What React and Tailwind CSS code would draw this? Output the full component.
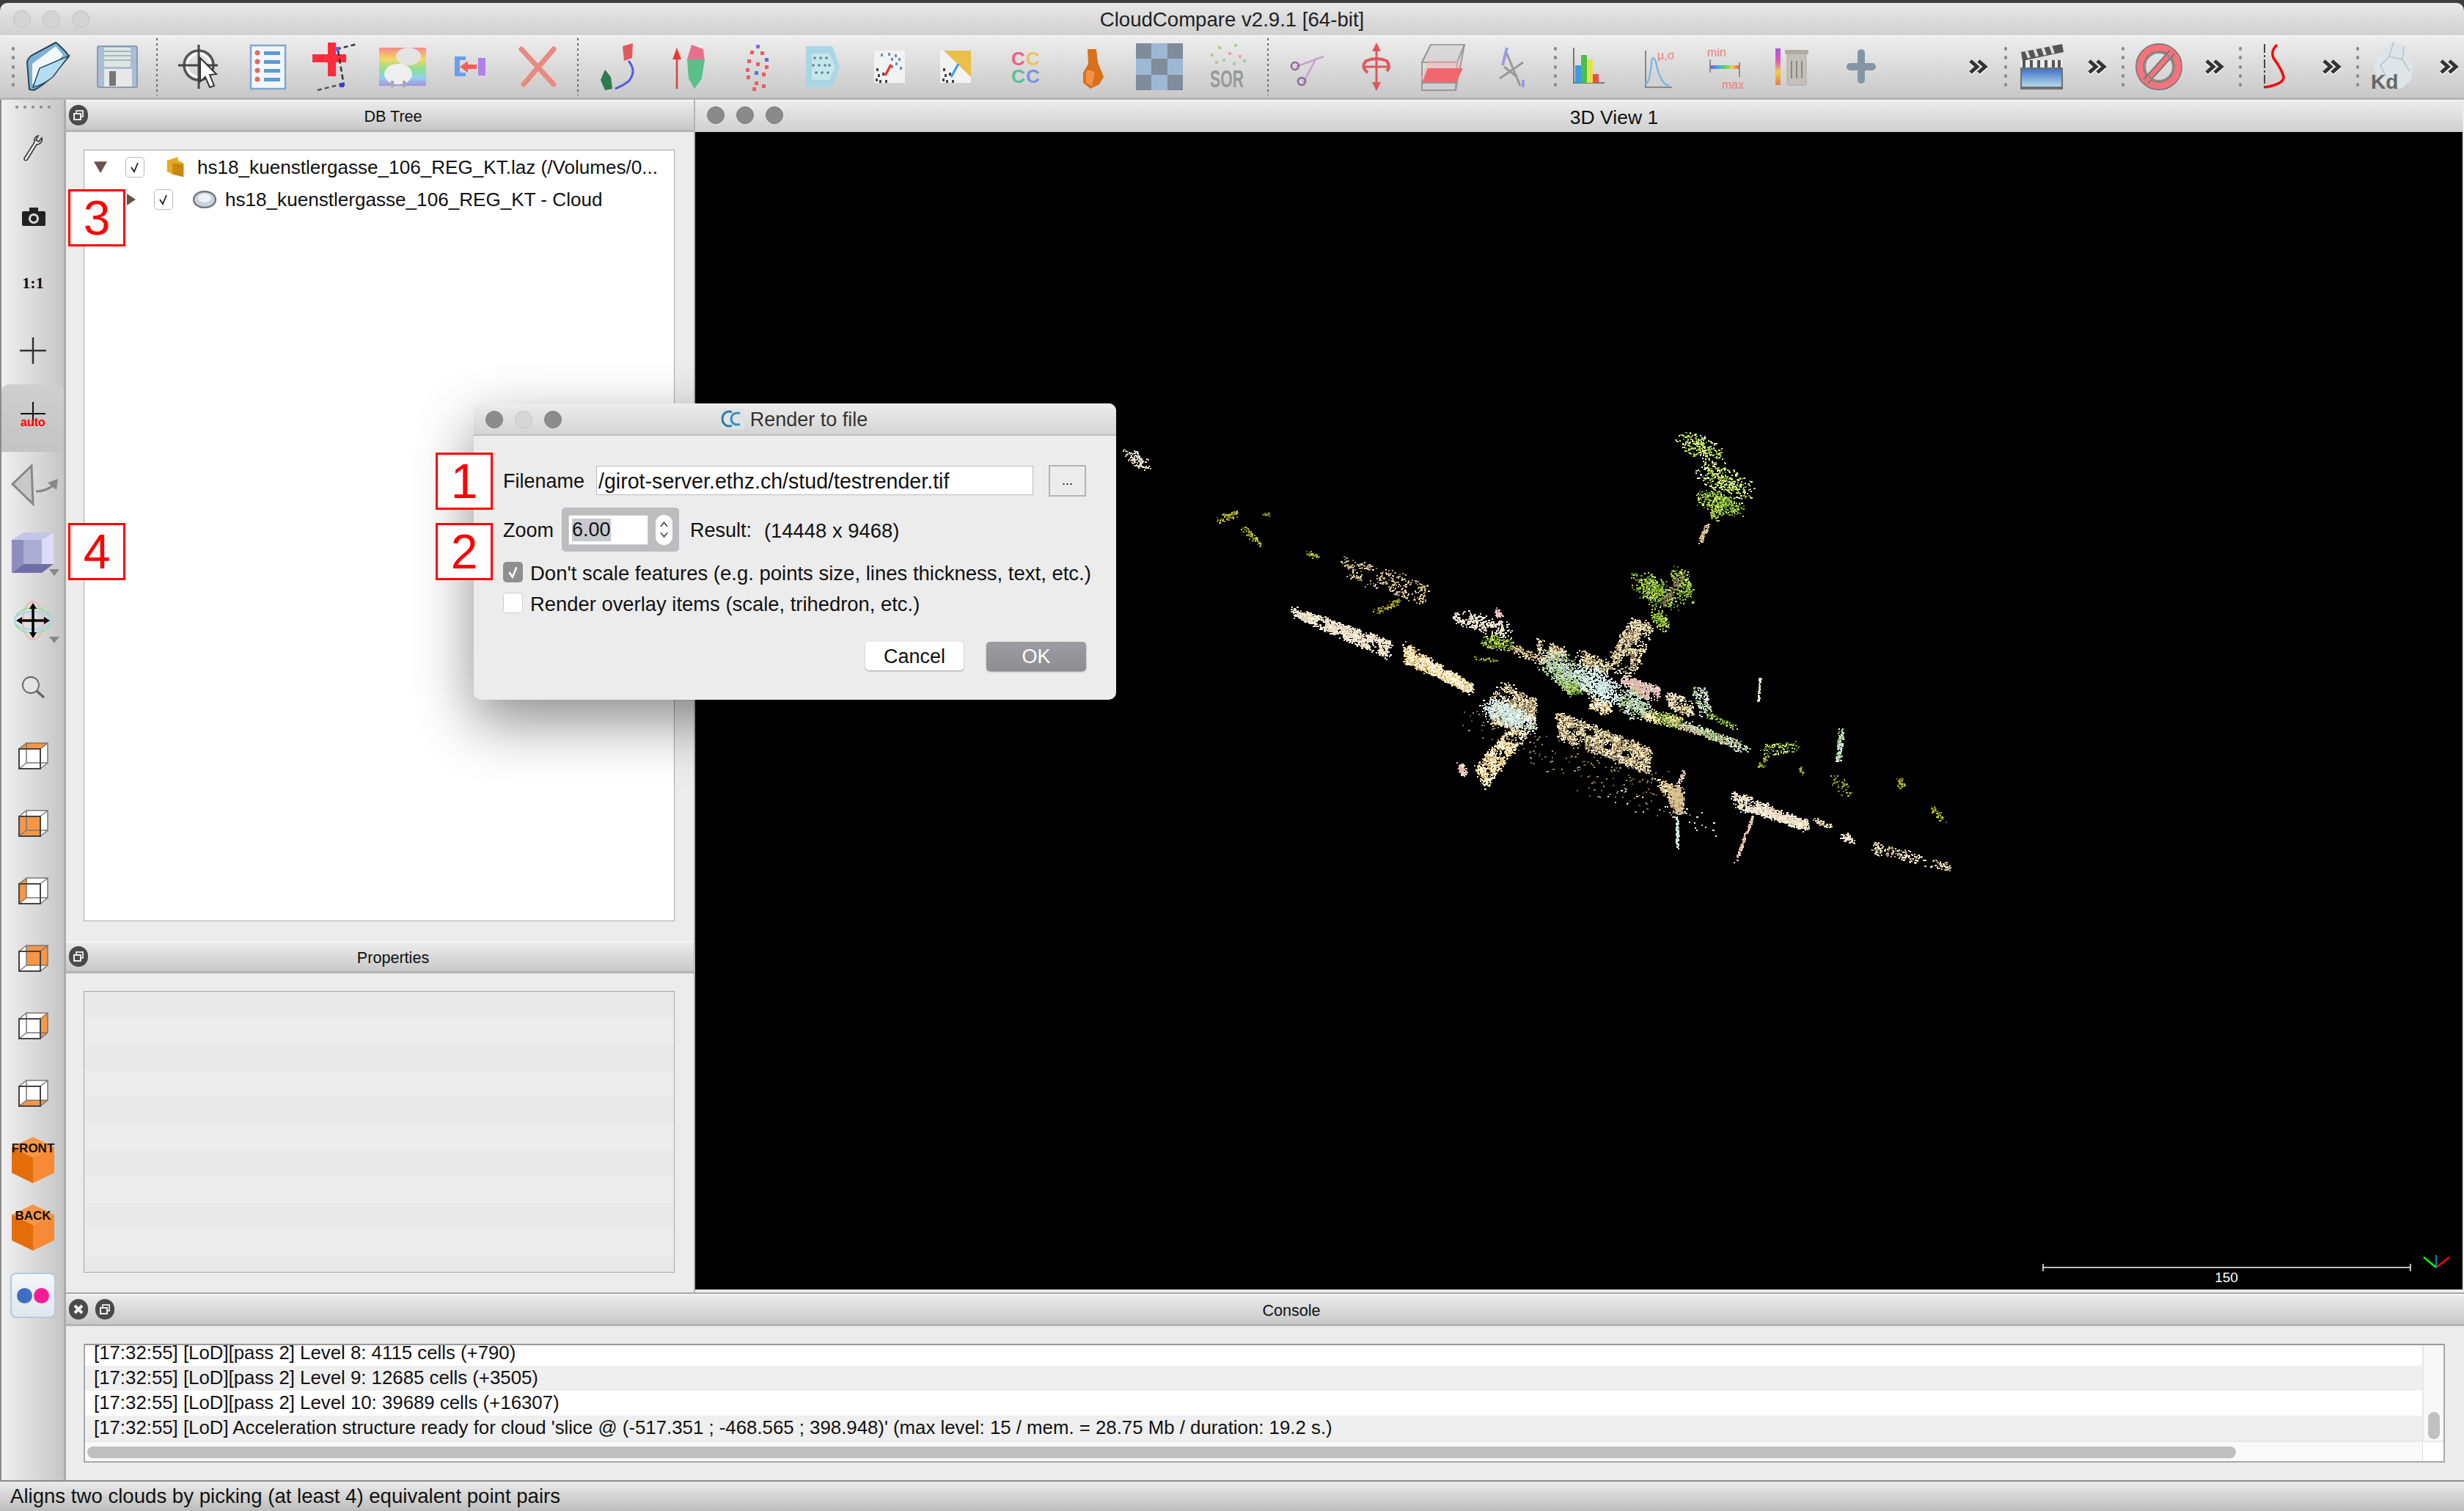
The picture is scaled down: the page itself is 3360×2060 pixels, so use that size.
import React, { useMemo } from "react";

// ---------- toolbar icons (72x72 box) ----------
const Box = ({ children, className = "" }) => (
  <svg viewBox="0 0 72 72" className={`w-[72px] h-[72px] block ${className}`}>
    {children}
  </svg>
);

const FolderIcon = () => (
  <Box>
    <path d="M8 67 L5 30 Q6 24 12 20 L44 3 L47 5 L58 16 L62 22 L38 50 Q26 62 14 68 Z" fill="#7fb2d4" stroke="#28465c" strokeWidth="2" />
    <path d="M12 60 L12 32 L44 8 L54 20 L32 46 Z" fill="#f2f7fb" />
    <path d="M13 64 L22 38 L62 21 L40 50 Q28 60 13 64 Z" fill="#b4dcf2" stroke="#2a4a60" strokeWidth="1.5" />
  </Box>
);
const SaveIcon = () => (
  <Box>
    <rect x="9" y="8" width="54" height="56" rx="2" fill="#a9bdd6" stroke="#8b9bb0" strokeWidth="2" />
    <rect x="18" y="10" width="36" height="26" fill="#dfe7e4" />
    <path d="M18 15h36M18 21h36M18 27h36" stroke="#a8b6bc" strokeWidth="2" />
    <rect x="18" y="39" width="38" height="24" fill="#e8e8e8" />
    <rect x="25" y="42" width="9" height="20" fill="#777" />
  </Box>
);
const PickIcon = () => (
  <Box>
    <circle cx="34" cy="34" r="20" fill="none" stroke="#555" strokeWidth="3.5" />
    <circle cx="34" cy="34" r="16" fill="none" stroke="#fff" strokeWidth="3" />
    <path d="M34 6V66M6 34H60" stroke="#444" strokeWidth="3" />
    <path d="M36 24 L36 56 L43 50 L49 64 L55 62 L49 47 L58 46 Z" fill="#fff" stroke="#333" strokeWidth="2" />
  </Box>
);
const ListIcon = () => (
  <Box>
    <rect x="13" y="7" width="47" height="59" fill="#f2f6fa" stroke="#7fa8cf" strokeWidth="2.5" />
    {[17, 29, 41, 53].map((y) => (
      <g key={y}>
        <circle cx="22" cy={y} r="3.5" fill="#e8685e" />
        <rect x="31" y={y - 2} width="22" height="5" fill="#5b9bd5" />
      </g>
    ))}
  </Box>
);
const CrossIcon = () => (
  <Box>
    <rect x="26" y="3" width="11" height="46" fill="#ff2a3c" />
    <rect x="5" y="19" width="46" height="11" fill="#ff2a3c" />
    <path d="M38 12 L66 5" stroke="#333" strokeWidth="2.5" strokeDasharray="6 4" />
    <path d="M40 14 L48 62" stroke="#333" strokeWidth="2.5" strokeDasharray="7 4" />
    <path d="M12 68 L44 60" stroke="#555" strokeWidth="2.5" strokeDasharray="6 4" />
    <rect x="36" y="9" width="6" height="6" fill="#6a5ae0" />
    <rect x="42" y="58" width="6" height="6" fill="#3a3ae0" />
  </Box>
);
const RainbowIcon = () => (
  <Box>
    <defs>
      <linearGradient id="rb" x1="0" y1="0" x2="0" y2="1">
        <stop offset="0" stopColor="#f58a8a" />
        <stop offset="0.3" stopColor="#f6d860" />
        <stop offset="0.55" stopColor="#8fe08f" />
        <stop offset="0.8" stopColor="#8fd0f0" />
        <stop offset="1" stopColor="#a78fe0" />
      </linearGradient>
    </defs>
    <rect x="4" y="10" width="64" height="52" fill="url(#rb)" />
    <ellipse cx="44" cy="22" rx="17" ry="12" fill="#e4e4e4" />
    <ellipse cx="30" cy="46" rx="19" ry="14" fill="#efefef" />
    <rect x="20" y="55" width="4" height="9" fill="#aaa" />
    <rect x="36" y="55" width="4" height="9" fill="#aaa" />
  </Box>
);
const MergeIcon = () => (
  <Box>
    <rect x="15" y="22" width="7" height="27" fill="#5b9ef0" />
    <path d="M15 22H30V27H22V44H30V49H15Z" fill="#6aa0f0" />
    <rect x="47" y="24" width="10" height="24" fill="#b27fe8" />
    <path d="M45 33H33V28L22 36L33 44V39H45Z" fill="#ff5a5a" />
  </Box>
);
const XIcon = () => (
  <Box>
    <path d="M14 12 L58 60 M58 12 L17 60" stroke="#e88a7e" strokeWidth="7" strokeLinecap="round" />
  </Box>
);
const RegIcon = () => (
  <Box>
    <path d="M40 8 L54 4 L53 24 L42 28 Z" fill="#e05a5a" />
    <path d="M16 40 L24 50 L26 66 L16 68 L10 54 Z" fill="#2f7a4f" />
    <path d="M48 28 Q60 42 48 56 Q40 62 30 66" fill="none" stroke="#5a5ae8" strokeWidth="3" />
  </Box>
);
const NormalIcon = () => (
  <Box>
    <path d="M42 6 L58 12 L60 28 L36 26 Z" fill="#e8708a" />
    <path d="M36 26 L60 26 L56 52 L46 66 L38 52 Z" fill="#58c088" />
    <path d="M22 66V22" stroke="#e83a3a" strokeWidth="2.5" />
    <path d="M22 10 L16 26 H28 Z" fill="#e83a3a" />
  </Box>
);
const DotsIcon = () => (
  <Box>
    {[
      [38, 6, "#8a6ae0"], [30, 14, "#f05a5a"], [44, 15, "#f05a5a"], [50, 24, "#5a70e0"], [26, 26, "#f05a5a"], [38, 30, "#f05a5a"],
      [50, 34, "#f05a5a"], [24, 38, "#f05a5a"], [36, 42, "#5a70e0"], [46, 44, "#f05a5a"], [25, 48, "#f05a5a"], [36, 56, "#f05a5a"], [46, 60, "#f05a5a"], [33, 64, "#f05a5a"],
    ].map(([x, y, c], i) => (
      <rect key={i} x={x} y={y} width="5" height="5" fill={c} />
    ))}
  </Box>
);
const TileIcon = () => (
  <Box>
    <path d="M14 8H50L60 36L50 64H14Z" fill="#a9d6e6" />
    <path d="M22 18H46L54 36L46 54H22Z" fill="#c5e6ea" />
    {[[26, 24], [34, 24], [42, 24], [24, 34], [32, 34], [40, 34], [46, 34], [28, 44], [36, 44], [44, 44]].map(([x, y], i) => (
      <circle key={i} cx={x} cy={y} r="1.8" fill="#5b7f8f" />
    ))}
  </Box>
);
const ScatterIcon = () => (
  <Box>
    <rect x="15" y="14" width="42" height="44" fill="#f2f2f2" />
    {[[24, 18], [34, 17], [43, 19], [38, 24], [48, 24], [44, 30], [38, 34], [50, 36]].map(([x, y], i) => (
      <rect key={i} x={x} y={y} width="3" height="4" fill="#6a90b8" />
    ))}
    {[[18, 38], [20, 46], [26, 44], [22, 54], [30, 54], [17, 52]].map(([x, y], i) => (
      <rect key={i} x={x} y={y} width="3" height="4" fill="#444" />
    ))}
    <path d="M30 48 L38 33" stroke="#e83a3a" strokeWidth="3.5" />
  </Box>
);
const ScatterTriIcon = () => (
  <Box>
    <rect x="13" y="14" width="42" height="44" fill="#f2f2f2" />
    <path d="M18 14H55V50Z" fill="#e8c04a" />
    {[[17, 38], [19, 46], [25, 44], [21, 54], [29, 54], [16, 52]].map(([x, y], i) => (
      <rect key={i} x={x} y={y} width="3" height="4" fill="#444" />
    ))}
    <path d="M28 50 L38 32" stroke="#3a9ae8" strokeWidth="3" />
  </Box>
);
const CcIcon = () => (
  <Box>
    <text x="18" y="34" fontFamily="Liberation Sans, sans-serif" fontSize="26" fontWeight="700" fill="#f0608a">C</text>
    <text x="38" y="34" fontFamily="Liberation Sans, sans-serif" fontSize="26" fontWeight="700" fill="#f2c060">C</text>
    <text x="18" y="58" fontFamily="Liberation Sans, sans-serif" fontSize="26" fontWeight="700" fill="#58c098">C</text>
    <text x="38" y="58" fontFamily="Liberation Sans, sans-serif" fontSize="26" fontWeight="700" fill="#7f90e8">C</text>
  </Box>
);
const BottleIcon = () => (
  <Box>
    <path d="M30 12 L42 12 L44 30 L52 50 L46 60 L34 66 L24 58 L24 44 L31 32 Z" fill="#d8701c" />
    <path d="M28 42 Q34 38 40 44 L36 62 L28 58 Z" fill="#f29044" />
  </Box>
);
const Checker = () => (
  <div className="grid grid-cols-3 grid-rows-3 w-[64px] h-[64px] mx-auto">
    {[0, 1, 0, 1, 0, 1, 0, 1, 0].map((v, i) => (
      <div key={i} className={v ? "bg-[#9db8d4]" : "bg-[#7f8c9c]"} />
    ))}
  </div>
);
const SorIcon = () => (
  <Box>
    {[[24, 8, "#a8d090"], [46, 5, "#a8d090"], [38, 16, "#f0a0a0"], [52, 20, "#f0a0a0"], [14, 18, "#a8d090"], [30, 25, "#a8d090"], [58, 26, "#a8d090"], [20, 28, "#a8d090"], [44, 30, "#a8d090"]].map(([x, y, c], i) => (
      <rect key={i} x={x} y={y} width="4" height="4" fill={c} />
    ))}
    <text x="13" y="64" fontFamily="Liberation Sans, sans-serif" fontSize="34" fontWeight="700" fill="#999" textLength="46" lengthAdjust="spacingAndGlyphs">SOR</text>
  </Box>
);
const ScissorIcon = () => (
  <Box>
    <path d="M18 36 L56 22 M28 58 L46 24" stroke="#c8a0d0" strokeWidth="2.5" />
    <circle cx="17" cy="35" r="5" fill="none" stroke="#8a6a9a" strokeWidth="2.5" />
    <circle cx="26" cy="56" r="5" fill="none" stroke="#8a6a9a" strokeWidth="2.5" />
  </Box>
);
const RotTransIcon = () => (
  <Box>
    <path d="M36 6V66" stroke="#e0565e" strokeWidth="3" />
    <path d="M36 3 L30 15 H42Z M36 69 L30 57 H42Z" fill="#e0565e" />
    <path d="M24 44 Q14 36 22 28 Q36 22 50 28 Q56 36 50 42" fill="none" stroke="#e0565e" strokeWidth="4" />
    <path d="M18 36H54" stroke="#e0565e" strokeWidth="3" />
  </Box>
);
const SliceIcon = () => (
  <Box>
    <path d="M6 30 L18 6 L64 6 L52 68 L6 68 Z" fill="none" stroke="#999" strokeWidth="2" />
    <path d="M18 6 L6 30 H54 L64 6" fill="rgba(200,200,200,.4)" stroke="#999" strokeWidth="2" />
    <path d="M6 30 H54 L52 68" fill="none" stroke="#999" strokeWidth="2" />
    <path d="M14 27 L60 27 L50 54 L4 54 Z" fill="rgba(245,180,180,.5)" />
    <path d="M14 38 L62 38 L52 58 H6 Z" fill="#f0686e" />
    <path d="M6 58 H52" stroke="#999" strokeWidth="2" />
  </Box>
);
const StarIcon = () => (
  <Box>
    <path d="M28 14 L48 62 M20 52 L52 30 M26 36 L44 50" stroke="#999" strokeWidth="3" />
    <path d="M30 10 L24 34 M52 54 L52 64" stroke="#9a9ae8" strokeWidth="4" />
  </Box>
);
const HistIcon = () => (
  <Box>
    <path d="M12 10V58H54" fill="none" stroke="#777" strokeWidth="2" />
    <rect x="14" y="34" width="8" height="24" fill="#3a9ae8" />
    <rect x="22" y="20" width="8" height="38" fill="#4ac04a" />
    <rect x="30" y="26" width="8" height="32" fill="#e8e04a" />
    <rect x="38" y="46" width="8" height="12" fill="#e8504a" />
  </Box>
);
const GaussIcon = () => (
  <Box>
    <path d="M18 14V64H54" fill="none" stroke="#888" strokeWidth="2" />
    <path d="M18 60 Q24 56 26 30 Q28 18 32 30 Q38 60 50 62" fill="none" stroke="#7ab8e0" strokeWidth="2.5" />
    <text x="34" y="26" fontFamily="Liberation Sans, sans-serif" fontSize="16" fill="#f07f7f">μ,σ</text>
  </Box>
);
const MinMaxIcon = () => (
  <Box>
    <text x="10" y="22" fontFamily="Liberation Sans, sans-serif" fontSize="16" fill="#f07f7f">min</text>
    <text x="30" y="66" fontFamily="Liberation Sans, sans-serif" fontSize="16" fill="#f07f7f">max</text>
    <defs>
      <linearGradient id="mm">
        <stop offset="0" stopColor="#7a5ae0" />
        <stop offset="0.3" stopColor="#4ab0e0" />
        <stop offset="0.5" stopColor="#5ad05a" />
        <stop offset="0.75" stopColor="#e8d04a" />
        <stop offset="1" stopColor="#e85a5a" />
      </linearGradient>
    </defs>
    <rect x="14" y="34" width="40" height="5" fill="url(#mm)" />
    <path d="M14 26V44M54 30V50" stroke="#777" strokeWidth="1.5" />
  </Box>
);
const TrashIcon = () => (
  <Box>
    <defs>
      <linearGradient id="tb" x1="0" y1="0" x2="0" y2="1">
        <stop offset="0" stopColor="#a05ae0" />
        <stop offset="0.35" stopColor="#e85ab0" />
        <stop offset="0.65" stopColor="#e8d04a" />
        <stop offset="1" stopColor="#e87a4a" />
      </linearGradient>
    </defs>
    <rect x="11" y="11" width="7" height="50" fill="url(#tb)" />
    <rect x="27" y="16" width="26" height="45" rx="2" fill="#c4c0b8" stroke="#aaa" />
    <rect x="24" y="13" width="32" height="6" rx="2" fill="#b0aca4" />
    <path d="M33 28V52M40 28V52M47 28V52" stroke="#888" strokeWidth="2" />
  </Box>
);
const PlusIcon = () => (
  <Box>
    <path d="M36 17V54M21 36H51" stroke="#8496a6" strokeWidth="10" strokeLinecap="round" />
  </Box>
);
const ClapIcon = () => (
  <Box>
    <path d="M8 16 L64 5 L66 16 L10 28 Z" fill="#555" />
    <path d="M15 14 L19 24 M26 11 L30 22 M37 9 L41 20 M48 7 L52 18" stroke="#ddd" strokeWidth="4" />
    <rect x="7" y="27" width="58" height="10" fill="#eee" />
    <path d="M12 27V37M22 27V37M32 27V37M42 27V37M52 27V37M60 27V37" stroke="#555" strokeWidth="4" />
    <defs>
      <linearGradient id="cl" x1="0" y1="0" x2="0" y2="1">
        <stop offset="0" stopColor="#3f74c8" />
        <stop offset="1" stopColor="#b5d8ea" />
      </linearGradient>
    </defs>
    <rect x="7" y="37" width="58" height="30" fill="#6f6f6f" />
    <rect x="9" y="39" width="54" height="24" fill="url(#cl)" />
  </Box>
);
const NoIcon = () => (
  <Box>
    <circle cx="36" cy="36" r="26" fill="none" stroke="#777" strokeWidth="12" />
    <circle cx="36" cy="36" r="26" fill="none" stroke="#f4737c" strokeWidth="9" />
    <path d="M18 56 L54 16" stroke="#777" strokeWidth="10" />
    <path d="M18 56 L54 16" stroke="#f4737c" strokeWidth="6" />
    <circle cx="36" cy="36" r="19" fill="none" stroke="#888" strokeWidth="2" />
  </Box>
);
const SCurveIcon = () => (
  <Box>
    <path d="M20 5V68" stroke="#444" strokeWidth="2" strokeDasharray="12 3 3 3" />
    <path d="M37 6 Q28 14 32 24 Q44 40 46 50 Q46 60 20 64" fill="none" stroke="#f00" strokeWidth="3.5" />
  </Box>
);
const KdIcon = () => (
  <Box>
    <path d="M36 2 L50 8 L62 34 L60 54 L46 66 L20 60 L8 38 L18 16 Z" fill="#dde5e8" />
    <path d="M36 2 L30 22 L48 26 L50 8 M30 22 L18 34 L26 50 M48 26 L58 42" fill="none" stroke="#b8c4c8" strokeWidth="1.5" />
    <text x="5" y="66" fontFamily="Liberation Sans, sans-serif" fontSize="28" fontWeight="700" fill="#666">Kd</text>
  </Box>
);

const More = () => (
  <svg viewBox="0 0 30 22" className="w-[30px] h-[22px] block">
    <path d="M4 3 L13 11 L4 19 M15 3 L24 11 L15 19" fill="none" stroke="#fff" strokeWidth="5" transform="translate(0 1.5)" />
    <path d="M4 3 L13 11 L4 19 M15 3 L24 11 L15 19" fill="none" stroke="#333" strokeWidth="5" />
  </svg>
);

// toolbar pieces
const Slot = ({ children }) => (
  <div className="w-[92px] h-full flex items-center justify-center shrink-0">{children}</div>
);
const DashSep = () => (
  <div className="w-[2px] h-[78px] shrink-0 bg-[repeating-linear-gradient(to_bottom,#6a6a6a_0,#6a6a6a_3px,transparent_3px,transparent_7px)]" />
);
const Handle = () => (
  <div className="w-[6px] h-[54px] flex flex-col justify-between items-center shrink-0">
    {[0, 1, 2, 3, 4].map((i) => (
      <div key={i} className="w-[4px] h-[5px] rounded-full bg-[#8a8a8a]" />
    ))}
  </div>
);
const Overflow = ({ icon }) => (
  <div className="w-[160px] h-full flex items-center shrink-0">
    <Handle />
    <div className="w-[92px] flex items-center justify-center">{icon}</div>
    <div className="w-[60px] flex items-center justify-center"><More /></div>
  </div>
);

function TopToolbar() {
  return (
    <div className="h-[88px] flex items-center border-t border-[#f6f6f6] border-b-[3px] border-b-[#b4b4b4] bg-gradient-to-b from-[#eeeeee] to-[#c8c8c8] pl-[15px]">
      <Handle />
      <div className="w-[1px] shrink-0" />
      <Slot><FolderIcon /></Slot>
      <Slot><SaveIcon /></Slot>
      <div className="w-[7px] shrink-0" />
      <DashSep />
      <div className="w-[12px] shrink-0" />
      <Slot><PickIcon /></Slot>
      <Slot><ListIcon /></Slot>
      <Slot><CrossIcon /></Slot>
      <Slot><RainbowIcon /></Slot>
      <Slot><MergeIcon /></Slot>
      <Slot><XIcon /></Slot>
      <div className="w-[8px] shrink-0" />
      <DashSep />
      <div className="w-[10px] shrink-0" />
      <Slot><RegIcon /></Slot>
      <Slot><NormalIcon /></Slot>
      <Slot><DotsIcon /></Slot>
      <Slot><TileIcon /></Slot>
      <Slot><ScatterIcon /></Slot>
      <Slot><ScatterTriIcon /></Slot>
      <Slot><CcIcon /></Slot>
      <Slot><BottleIcon /></Slot>
      <Slot><Checker /></Slot>
      <Slot><SorIcon /></Slot>
      <div className="w-[9px] shrink-0" />
      <DashSep />
      <div className="w-[9px] shrink-0" />
      <Slot><ScissorIcon /></Slot>
      <Slot><RotTransIcon /></Slot>
      <Slot><SliceIcon /></Slot>
      <Slot><StarIcon /></Slot>
      <div className="w-[11px] shrink-0" />
      <Handle />
      <Slot><HistIcon /></Slot>
      <Slot><GaussIcon /></Slot>
      <Slot><MinMaxIcon /></Slot>
      <Slot><TrashIcon /></Slot>
      <Slot><PlusIcon /></Slot>
      <div className="w-[129px] shrink-0 flex justify-end"><More /></div>
      <div className="w-[19px] shrink-0" />
      <Overflow icon={<ClapIcon />} />
      <Overflow icon={<NoIcon />} />
      <Overflow icon={<SCurveIcon />} />
      <Overflow icon={<KdIcon />} />
    </div>
  );
}

// ---------- left toolbar icons ----------
const CubeFace = ({ face }) => {
  const F = { x: 17, y: 27, x2: 46, y2: 54 };
  const B = { x: 27, y: 19, x2: 56, y2: 46 };
  const shapes = {
    top: `M${F.x} ${F.y}L${B.x} ${B.y}H${B.x2}L${F.x2} ${F.y}Z`,
    front: `M${F.x} ${F.y}H${F.x2}V${F.y2}H${F.x}Z`,
    left: `M${F.x} ${F.y}L${B.x} ${B.y}V${B.y2}L${F.x} ${F.y2}Z`,
    back: `M${B.x} ${B.y}H${B.x2}V${B.y2}H${B.x}Z`,
    right: `M${F.x2} ${F.y}L${B.x2} ${B.y}V${B.y2}L${F.x2} ${F.y2}Z`,
    bottom: `M${F.x} ${F.y2}L${B.x} ${B.y2}H${B.x2}L${F.x2} ${F.y2}Z`,
  };
  return (
    <Box>
      <path d={`M${F.x} ${F.y}H${F.x2}V${F.y2}H${F.x}Z`} fill="#fff" />
      <path d={`M${F.x2} ${F.y}L${B.x2} ${B.y}V${B.y2}L${F.x2} ${F.y2}Z M${F.x} ${F.y}L${B.x} ${B.y}H${B.x2}L${F.x2} ${F.y}Z`} fill="#fff" />
      <path d={shapes[face]} fill="#f79646" />
      <path d={`M${B.x} ${B.y}H${B.x2}V${B.y2}H${B.x}Z M${F.x} ${F.y}L${B.x} ${B.y} M${F.x2} ${F.y}L${B.x2} ${B.y} M${F.x} ${F.y2}L${B.x} ${B.y2} M${F.x2} ${F.y2}L${B.x2} ${B.y2}`} fill="none" stroke="#777" strokeWidth="1.5" />
      <path d={`M${F.x} ${F.y}H${F.x2}V${F.y2}H${F.x}Z`} fill="none" stroke="#444" strokeWidth="2" />
    </Box>
  );
};
const OrangeCube = ({ label }) => (
  <Box>
    <path d="M36 4 L65 18 L36 32 L7 18 Z" fill="#f79646" />
    <path d="M7 18 L36 32 V67 L7 53 Z" fill="#e46c0a" />
    <path d="M65 18 L36 32 V67 L65 53 Z" fill="#f68a36" />
    <text x="36" y="25" textAnchor="middle" fontFamily="Liberation Sans, sans-serif" fontSize="17" fontWeight="700" fill="#111">{label}</text>
  </Box>
);
const leftIcons = [
  <Box key="wrench"><path d="M24 50 L38 28 A7 7 0 0 1 43 19 L40 25 L44 27 L48 22 A7 7 0 0 1 41 31 L28 52 Q24 54 24 50Z" fill="#f2f2f2" stroke="#444" strokeWidth="1.8" /></Box>,
  <Box key="camera"><rect x="21" y="30" width="32" height="20" rx="2" fill="#222" /><rect x="31" y="25" width="12" height="6" fill="#222" /><circle cx="37" cy="40" r="7" fill="#ddd" /><circle cx="37" cy="40" r="4" fill="#222" /></Box>,
  <Box key="one"><text x="36" y="43" textAnchor="middle" fontFamily="Liberation Serif, serif" fontSize="22" fontWeight="700" fill="#111">1:1</text></Box>,
  <Box key="plus"><path d="M36 18V54M18 36H54" stroke="#333" strokeWidth="2.5" /></Box>,
  <Box key="auto"><path d="M36 14V46M19 30H53" stroke="#111" strokeWidth="2" /><text x="36" y="47" textAnchor="middle" fontFamily="Liberation Sans, sans-serif" fontSize="16" fontWeight="700" fill="#f00">auto</text></Box>,
  <Box key="tri"><path d="M34 9 L8 34 L36 61 Z" fill="#c9c9c9" stroke="#888" strokeWidth="3" /><path d="M40 44 Q54 44 66 34" fill="none" stroke="#888" strokeWidth="3" /><path d="M56 32 L70 27 L68 42 Z" fill="#888" /></Box>,
  <Box key="cube"><path d="M7 18 L23 8 H64 L48 18 Z" fill="#c5c5ec" /><path d="M48 18 L64 8 V51 L48 63 Z" fill="#dcdcf8" /><rect x="23" y="18" width="25" height="33" fill="#adadd4" /><path d="M7 18 H23 V51 L7 63 Z" fill="#8d8dc0" /><path d="M7 63 L23 51 H64 L48 63 Z" fill="#6f6fa8" /><path d="M58 58 H72 L65 67 Z" fill="#888" /></Box>,
  <Box key="move"><ellipse cx="36" cy="36" rx="14" ry="26" fill="none" stroke="#f4b4b4" strokeWidth="2" /><ellipse cx="36" cy="36" rx="25" ry="17" fill="none" stroke="#98e098" strokeWidth="2" /><ellipse cx="36" cy="36" rx="25" ry="12" fill="none" stroke="#a8d4f4" strokeWidth="2" /><path d="M36 16V56M17 36H55" stroke="#000" strokeWidth="3.5" /><path d="M36 12 L31 20 H41Z M36 60 L31 52 H41Z M13 36 L21 31 V41Z M59 36 L51 31 V41Z" fill="#000" /><path d="M58 58 H72 L65 67 Z" fill="#888" /></Box>,
  <Box key="lens"><circle cx="33" cy="32" r="11" fill="#e4e4e4" stroke="#666" strokeWidth="1.8" /><path d="M41 40 L51 49" stroke="#666" strokeWidth="3.5" /></Box>,
  <CubeFace key="top" face="top" />,
  <CubeFace key="front" face="front" />,
  <CubeFace key="left" face="left" />,
  <CubeFace key="back" face="back" />,
  <CubeFace key="right" face="right" />,
  <CubeFace key="bottom" face="bottom" />,
  <OrangeCube key="F" label="FRONT" />,
  <OrangeCube key="B" label="BACK" />,
];

function LeftToolbar() {
  return (
    <div className="w-[90px] shrink-0 border-l-2 border-[#8a8a8a] border-r-[3px] border-r-[#ababab] bg-gradient-to-r from-[#f0f0f0] to-[#c6c6c6] flex flex-col items-center">
      <div className="h-[20px] w-full flex items-center justify-center gap-[7px] shrink-0">
        {[0, 1, 2, 3, 4].map((i) => (
          <div key={i} className="w-[4px] h-[4px] rounded-full bg-[#8a8a8a]" />
        ))}
      </div>
      {leftIcons.map((icon, i) => (
        <div
          key={i}
          className={`w-full h-[92px] flex items-center justify-center shrink-0 ${i === 4 ? "bg-gradient-to-b from-[#cfcfcf] to-[#c4c4c4] rounded-t-[10px]" : ""}`}
        >
          {icon}
        </div>
      ))}
      <div className="h-[92px] flex items-center justify-center shrink-0">
        <div className="w-[62px] h-[62px] rounded-[8px] border-2 border-[#b8c8d6] bg-gradient-to-b from-[#f4f6f8] to-[#dfe6ee] flex items-center justify-center gap-[2px]">
          <div className="w-[21px] h-[21px] rounded-full bg-[#3f6fc4]" />
          <div className="w-[21px] h-[21px] rounded-full bg-[#fb1a96]" />
        </div>
      </div>
    </div>
  );
}

// ---------- shared bits ----------
const Tip = ({ x }) => (
  <div className="w-[26px] h-[28px] rounded-full bg-[#4a4a4a] flex items-center justify-center shrink-0">
    {x ? (
      <svg viewBox="0 0 16 16" className="w-[16px] h-[16px]"><path d="M3 3L13 13M13 3L3 13" stroke="#eee" strokeWidth="4" /></svg>
    ) : (
      <svg viewBox="0 0 16 16" className="w-[16px] h-[16px]"><rect x="5" y="2" width="9" height="8" fill="none" stroke="#ddd" strokeWidth="2" /><rect x="2" y="6" width="9" height="8" fill="#4a4a4a" stroke="#eee" strokeWidth="2" /></svg>
    )}
  </div>
);

const DockTitle = ({ title, close }) => (
  <div className={`h-[44px] relative flex items-center justify-center shrink-0 border-t-2 border-[#f4f4f4] border-b-[3px] border-b-[#b4b4b4] bg-gradient-to-b from-[#ececec] to-[#c8c8c8] ${close ? "pl-[72px]" : "pl-[36px]"}`}>
    <div className="absolute left-[4px] top-[5px] flex gap-[10px]">
      {close && <Tip x />}
      <Tip />
    </div>
    <span className="text-[21.6px] leading-[28px] text-[#111] pt-[2px]">{title}</span>
  </div>
);

const Lights = ({ cls, gap = "gap-[16px]" }) => (
  <div className={`flex ${gap}`}>
    {cls.map((c, i) => (
      <div key={i} className={`w-[24px] h-[24px] rounded-full border ${c}`} />
    ))}
  </div>
);

const Check = ({ className = "" }) => (
  <div className={`w-[26px] h-[28px] rounded-[5px] border border-[#b8b8b8] bg-white flex items-center justify-center shrink-0 ${className}`}>
    <svg viewBox="0 0 16 16" className="w-[16px] h-[16px]"><path d="M3 8 L7 14 L12 2" fill="none" stroke="#222" strokeWidth="1.8" /></svg>
  </div>
);

const Note = ({ n, className }) => (
  <div className={`absolute w-[78px] h-[78px] bg-white border-[3px] border-[#f00] flex items-center justify-center text-[#f00] text-[66px] leading-[72px] ${className}`}>
    {n}
  </div>
);

// ---------- point cloud ----------
const P = {
  cream: ["#fff8e0", "#f5e6b8", "#e8d49a", "#ffffff", "#c9b48a", "#8f7d5a"],
  white: ["#ffffff", "#fff6e6", "#f0e2c8", "#d8c8a8", "#ffffff"],
  tan: ["#b9a070", "#d8c090", "#8f7d5a", "#f0dfb8"],
  yellow: ["#f8e0a0", "#f0d080", "#fff0c0", "#c0a060", "#fff8e8"],
  green: ["#9fc93a", "#5f8f2a", "#c7d94a", "#3f6f2a", "#e8f0a0"],
  leaf: ["#ffffff", "#e8f0a0", "#a8d040", "#5f9f2a", "#d0e060"],
  tree: ["#dfe8f0", "#b8d0c0", "#9fc080", "#ffffff", "#6f9f3a"],
  pink: ["#f0d8d0", "#ffffff", "#d8b0a0", "#e8c8c0"],
  teal: ["#c0e0d8", "#dfe8f0", "#e8fff8", "#ffffff"],
  dim: ["#5f4f3a", "#8f7d5a", "#7a6a50", "#a89878"],
  olive: ["#a0a030", "#708020", "#c8c840", "#606020"],
};

// facades as quads in crop units: 4 corners (a b along the top, c d back along the bottom), count, palette, fill rate of the window grid
const QUADS = [
  [340, 645, 515, 745, 512, 800, 345, 668, 1900, "white", 0.8],
  [542, 752, 660, 880, 660, 903, 542, 810, 1900, "yellow", 0.85],
  [700, 860, 775, 925, 770, 1010, 695, 1000, 2100, "cream", 0.75],
  [735, 1005, 760, 1030, 685, 1195, 668, 1130, 1400, "yellow", 0.8],
  [812, 960, 978, 1075, 975, 1150, 815, 1040, 2900, "cream", 0.7],
  [1125, 1205, 1258, 1295, 1258, 1322, 1125, 1250, 1400, "white", 0.8],
  [1375, 1360, 1510, 1425, 1510, 1445, 1375, 1390, 350, "cream", 0.5],
  [945, 680, 985, 690, 950, 850, 895, 830, 1500, "cream", 0.7],
  [930, 850, 995, 890, 990, 930, 930, 900, 1000, "pink", 0.8],
  [1010, 905, 1050, 930, 1052, 975, 1012, 945, 550, "cream", 0.75],
  [780, 740, 825, 770, 825, 810, 780, 785, 550, "cream", 0.7],
  [625, 645, 730, 690, 732, 740, 630, 690, 550, "white", 0.5],
  [430, 485, 582, 570, 578, 635, 435, 550, 550, "tan", 0.4],
  [880, 925, 910, 940, 905, 970, 870, 950, 260, "yellow", 1],
  [960, 950, 1040, 985, 1030, 1010, 970, 985, 450, "yellow", 0.9],
  [1015, 1190, 1035, 1195, 1035, 1270, 1018, 1268, 600, "tan", 1],
  [988, 1160, 1020, 1190, 1018, 1225, 1005, 1210, 150, "yellow", 1],
];

// loose clumps: x0, y0, x1, y1, thickness, count, palette
const SEGS = [
  [52, 175, 78, 210, 30, 100, "white"],
  [1042, 130, 1092, 175, 50, 220, "leaf"],
  [1078, 215, 1145, 290, 60, 330, "leaf"],
  [1080, 305, 1130, 345, 50, 380, "green"],
  [1092, 345, 1095, 375, 16, 50, "green"],
  [1082, 390, 1068, 445, 9, 80, "tan"],
  [210, 378, 240, 358, 20, 60, "olive"],
  [290, 355, 300, 362, 12, 14, "olive"],
  [255, 400, 285, 455, 14, 60, "olive"],
  [368, 475, 385, 490, 14, 30, "olive"],
  [490, 660, 535, 620, 18, 60, "olive"],
  [705, 650, 712, 672, 12, 40, "pink"],
  [690, 745, 725, 760, 36, 150, "green"],
  [665, 798, 705, 805, 10, 30, "olive"],
  [730, 765, 790, 810, 24, 120, "tan"],
  [855, 790, 895, 830, 34, 220, "cream"],
  [800, 800, 855, 880, 60, 650, "tree"],
  [820, 860, 850, 905, 30, 220, "green"],
  [862, 845, 908, 915, 60, 600, "teal"],
  [965, 560, 1010, 625, 55, 440, "green"],
  [1030, 535, 1045, 615, 36, 220, "green"],
  [990, 660, 1005, 705, 28, 150, "green"],
  [1035, 540, 1000, 640, 12, 90, "dim"],
  [935, 915, 965, 965, 55, 320, "tree"],
  [695, 945, 760, 1005, 50, 620, "teal"],
  [640, 1125, 648, 1152, 14, 70, "pink"],
  [1000, 985, 1130, 1060, 20, 320, "tan"],
  [1040, 1000, 1150, 1075, 24, 240, "tree"],
  [990, 975, 1030, 1000, 34, 110, "green"],
  [1065, 895, 1080, 965, 28, 150, "tree"],
  [1080, 970, 1130, 1010, 14, 80, "green"],
  [1272, 1290, 1298, 1312, 12, 50, "cream"],
  [1325, 1340, 1340, 1360, 18, 60, "white"],
  [1040, 1140, 1028, 1190, 8, 50, "pink"],
  [1027, 1285, 1028, 1378, 5, 90, "teal"],
  [1162, 1280, 1130, 1428, 6, 100, "pink"],
  [1175, 860, 1172, 932, 3, 50, "white"],
  [1320, 1018, 1315, 1115, 12, 130, "tree"],
  [1185, 1080, 1235, 1068, 34, 90, "green"],
  [1175, 1130, 1190, 1090, 14, 30, "olive"],
  [1425, 1172, 1428, 1190, 16, 30, "olive"],
  [1482, 1255, 1502, 1295, 14, 35, "olive"],
  [1310, 1165, 1330, 1210, 28, 45, "olive"],
  [1245, 1130, 1252, 1155, 7, 18, "olive"],
  [780, 1060, 1000, 1230, 130, 160, "dim"],
  [660, 960, 790, 1090, 80, 60, "dim"],
  [915, 1220, 1110, 1320, 60, 30, "white"],
];

function PointCloud() {
  // builds one path per colour so the DOM stays small
  const paths = useMemo(() => {
    let seed = 18273;
    const rnd = () => {
      seed = (seed * 16807) % 2147483647;
      return seed / 2147483647;
    };
    // patchy holes, so facades don't read as solid slabs
    const hole = (zx, zy) => {
      const h = Math.sin(Math.floor(zx / 16) * 12.9898 + Math.floor(zy / 22) * 78.233) * 43758.5453;
      return h - Math.floor(h) < 0.2;
    };
    const byColor = {};
    const put = (zx, zy, colors) => {
      const px = 1500 + zx / 1.3067 - 948;
      const py = 540 + zy / 2.24 - 180;
      const c = colors[Math.floor(rnd() * colors.length)];
      const w = rnd() < 0.3 ? 3 : 2;
      byColor[c] = (byColor[c] || "") + `M${Math.round(px)} ${Math.round(py)}h${w}v2h-${w}z`;
    };
    QUADS.forEach(([ax, ay, bx, by, cx, cy, dx, dy, n, pal, fill]) => {
      const cols = Math.max(4, Math.round(Math.hypot(bx - ax, by - ay) / 14));
      for (let i = 0; i < n; i++) {
        const u = rnd();
        const v = rnd();
        const inBay = (u * cols) % 1 < 0.3;
        const inStorey = (v * 5) % 1 < 0.25;
        if ((inBay || inStorey) && rnd() > fill * 0.6) continue;
        const tx = ax + (bx - ax) * u;
        const ty = ay + (by - ay) * u;
        const ex = dx + (cx - dx) * u;
        const ey = dy + (cy - dy) * u;
        // ragged edges
        const zx = tx + (ex - tx) * v + (rnd() - 0.5) * 10;
        const zy = ty + (ey - ty) * v + (rnd() - 0.5) * 14;
        if (hole(zx, zy) && rnd() < 0.85) continue;
        put(zx, zy, P[pal]);
      }
    });
    SEGS.forEach(([x0, y0, x1, y1, th, n, pal]) => {
      for (let i = 0; i < n; i++) {
        const t = rnd();
        const sx = rnd() - 0.5;
        const sy = rnd() - 0.5;
        put(x0 + (x1 - x0) * t + sx * th * 0.8, y0 + (y1 - y0) * t + sy * th, P[pal]);
      }
    });
    return Object.entries(byColor);
  }, []);

  return (
    <svg viewBox="0 0 2410 1578" className="w-full h-full block">
      {paths.map(([c, d]) => (
        <path key={c} d={d} fill={c} />
      ))}
      <path d="M1838 1548H2339M1838 1543V1553M2339 1543V1553" stroke="#fff" strokeWidth="1.5" fill="none" />
      <text x="2088" y="1568" textAnchor="middle" fontFamily="Liberation Sans, sans-serif" fontSize="19" fill="#fff">150</text>
      <path d="M2374 1548L2357 1534" stroke="#0f0" strokeWidth="2.5" />
      <path d="M2374 1548L2392 1534" stroke="#f00" strokeWidth="2.5" />
      <path d="M2374 1548V1531" stroke="#00b4ff" strokeWidth="1.5" />
    </svg>
  );
}

// ---------- dialog ----------
function RenderDialog() {
  return (
    <div className="absolute left-[646px] top-[550px] w-[876px] h-[404px] rounded-[10px] bg-[#ececec] shadow-[0_30px_80px_rgba(0,0,0,0.45)] flex flex-col text-[27px] text-[#111]">
      <div className="h-[44px] shrink-0 relative flex items-center justify-center rounded-t-[10px] border-b-2 border-[#bdbdbd] bg-gradient-to-b from-[#ededed] to-[#d4d4d4] pr-[2px]">
        <div className="absolute left-[16px] top-[10px]">
          <Lights cls={["bg-[#8c8c8c] border-[#808080]", "bg-[#d6d6d6] border-[#c4c4c4]", "bg-[#8c8c8c] border-[#808080]"]} />
        </div>
        <svg viewBox="0 0 32 28" className="w-[32px] h-[28px] mr-[8px]">
          <rect width="32" height="28" fill="#dfe3e6" />
          <path d="M15 5 A9 10 0 1 0 15 23" fill="none" stroke="#2c7aa6" strokeWidth="3" />
          <path d="M26 7 A8 8 0 1 0 26 21" fill="none" stroke="#3f8fb8" strokeWidth="3" />
        </svg>
        <span className="text-[27px] leading-[34px] text-[#333] pt-[2px]">Render to file</span>
      </div>

      <div className="flex items-center h-[44px] mt-[39px] pl-[40px]">
        <span className="w-[127px] shrink-0 pt-[3px]">Filename</span>
        <div className="w-[596px] h-[40px] bg-white border border-[#bbb] flex items-center pl-[2px] shrink-0 text-[28.6px] leading-[34px] whitespace-nowrap pt-[2px]">/girot-server.ethz.ch/stud/testrender.tif</div>
        <div className="ml-[21px] w-[51px] h-[43px] border-2 border-[#b4b4b4] bg-[#ececec] flex items-center justify-center text-[18px]">...</div>
      </div>

      <div className="flex items-center h-[60px] mt-[15px] pl-[40px]">
        <span className="w-[80px] shrink-0 pt-[3px]">Zoom</span>
        <div className="w-[160px] h-[60px] rounded-[5px] bg-[#bdbdc0] flex items-center pl-[9px] shrink-0">
          <div className="w-[109px] h-[41px] bg-white border border-[#ccc] flex items-center pl-[4px]">
            <span className="bg-[#c9c9d0] leading-[31px]">6.00</span>
          </div>
          <div className="ml-[10px] w-[23px] h-[41px] rounded-full bg-white flex flex-col items-center justify-center gap-[6px]">
            <svg viewBox="0 0 12 8" className="w-[11px] h-[8px]"><path d="M1 7L6 1L11 7" fill="none" stroke="#444" strokeWidth="1.8" /></svg>
            <svg viewBox="0 0 12 8" className="w-[11px] h-[8px]"><path d="M1 1L6 7L11 1" fill="none" stroke="#444" strokeWidth="1.8" /></svg>
          </div>
        </div>
        <span className="ml-[15px] w-[101px] shrink-0 pt-[3px]">Result:</span>
        <span className="pt-[3px] text-[27.4px]">(14448 x 9468)</span>
      </div>

      <div className="flex items-center h-[28px] mt-[14px] pl-[40px]">
        <div className="w-[27px] h-[28px] rounded-[5px] bg-[#8f8f8f] flex items-center justify-center shrink-0">
          <svg viewBox="0 0 16 16" className="w-[18px] h-[18px]"><path d="M3 8 L7 14 L12 2" fill="none" stroke="#fff" strokeWidth="2.2" /></svg>
        </div>
        <span className="ml-[10px] whitespace-nowrap text-[27.5px] pt-[3px]">Don't scale features (e.g. points size, lines thickness, text, etc.)</span>
      </div>
      <div className="flex items-center h-[28px] mt-[14px] pl-[40px]">
        <div className="w-[27px] h-[28px] rounded-[5px] bg-white border border-[#ccc] shrink-0" />
        <span className="ml-[10px] whitespace-nowrap text-[27.4px] pt-[3px]">Render overlay items (scale, trihedron, etc.)</span>
      </div>

      <div className="flex justify-end gap-[31px] mt-[39px] pr-[41px]">
        <button className="w-[134px] h-[39px] rounded-[5px] bg-white shadow-[0_1px_2px_rgba(0,0,0,0.35)]">Cancel</button>
        <button className="w-[136px] h-[40px] rounded-[5px] bg-gradient-to-b from-[#9c9ca0] to-[#8e8e92] text-white shadow-[0_1px_2px_rgba(0,0,0,0.35)]">OK</button>
      </div>
    </div>
  );
}

const LOG = [
  "[17:32:55] [LoD][pass 2] Level 8: 4115 cells (+790)",
  "[17:32:55] [LoD][pass 2] Level 9: 12685 cells (+3505)",
  "[17:32:55] [LoD][pass 2] Level 10: 39689 cells (+16307)",
  "[17:32:55] [LoD] Acceleration structure ready for cloud 'slice @ (-517.351 ; -468.565 ; 398.948)' (max level: 15 / mem. = 28.75 Mb / duration: 19.2 s.)",
];

export default function App() {
  return (
    <div className="relative w-[3360px] h-[2060px] overflow-hidden flex flex-col bg-[#3e3e3e] font-['Liberation_Sans',sans-serif] text-[#111]">
      <div className="h-[4px] shrink-0" />
      {/* Title bar */}
      <div className="h-[44px] shrink-0 relative flex items-center justify-center rounded-t-[10px] bg-gradient-to-b from-[#e8e8e8] to-[#d0d0d0]">
        <div className="absolute left-[18px] top-[10px]">
          <Lights cls={["bg-[#d4d4d4] border-[#c2c2c2]", "bg-[#d4d4d4] border-[#c2c2c2]", "bg-[#d4d4d4] border-[#c2c2c2]"]} />
        </div>
        <span className="text-[27.6px] leading-[34px] text-[#222] pt-[2px]">CloudCompare v2.9.1 [64-bit]</span>
      </div>

      <TopToolbar />

      {/* Main area */}
      <div className="flex-1 flex min-h-0 bg-[#ececec]">
        <LeftToolbar />
        <div className="flex-1 flex flex-col min-w-0">
          <div className="flex h-[1626px] shrink-0">
            {/* Docks */}
            <div className="w-[858px] shrink-0 flex flex-col border-r-2 border-[#b4b4b4]">
              <DockTitle title="DB Tree" />
              <div className="h-[1103px] shrink-0 pt-[24px] pl-[24px] pr-[26px]">
                <div className="h-[1052px] bg-white border border-[#a8a8a8] pt-[9px] text-[26.1px]">
                  <div className="flex items-center h-[28px] pl-[11px]">
                    <svg viewBox="0 0 16 16" className="w-[22px] h-[18px] shrink-0"><path d="M0 1H16L8 15Z" fill="#6e5048" /></svg>
                    <Check className="ml-[23px]" />
                    <svg viewBox="0 0 28 32" className="ml-[28px] w-[28px] h-[30px] shrink-0"><path d="M2 6 L18 1 V6 L26 10 V30 L10 26 L2 22Z" fill="#e8a820" /><path d="M10 10 L26 12 V30 L10 26Z" fill="#c88810" /></svg>
                    <span className="ml-[16px] whitespace-nowrap pt-[2px]">hs18_kuenstlergasse_106_REG_KT.laz (/Volumes/0...</span>
                  </div>
                  <div className="flex items-center h-[28px] mt-[16px] pl-[58px]">
                    <svg viewBox="0 0 12 16" className="w-[12px] h-[18px] shrink-0"><path d="M0 0V16L12 8Z" fill="#6e5048" /></svg>
                    <Check className="ml-[25px]" />
                    <svg viewBox="0 0 32 24" className="ml-[27px] w-[32px] h-[24px] shrink-0"><ellipse cx="16" cy="12" rx="15" ry="11" fill="#c8d4e4" stroke="#777" strokeWidth="2.5" /><ellipse cx="16" cy="10" rx="9" ry="6" fill="#eef2f6" /></svg>
                    <span className="ml-[12px] whitespace-nowrap pt-[2px]">hs18_kuenstlergasse_106_REG_KT - Cloud</span>
                  </div>
                </div>
              </div>
              <DockTitle title="Properties" />
              <div className="flex-1 pt-[24px] pl-[24px] pr-[26px]">
                <div className="h-[384px] border border-[#a8a8a8] bg-[#ececec] flex flex-col overflow-hidden">
                  {Array.from({ length: 11 }).map((_, i) => (
                    <div key={i} className={`h-[36px] shrink-0 ${i % 2 ? "bg-[#ededed]" : "bg-[#e9e9e9]"}`} />
                  ))}
                </div>
              </div>
            </div>
            {/* 3D view */}
            <div className="flex-1 flex flex-col min-w-0 pr-[2px] bg-[#ececec]">
              <div className="h-[44px] shrink-0 relative flex items-center justify-center border-t-2 border-[#f4f4f4] bg-gradient-to-b from-[#ececec] to-[#cfcfcf] pl-[96px]">
                <div className="absolute left-[16px] top-[7px]">
                  <Lights cls={["bg-[#8a8a8a] border-[#7c7c7c]", "bg-[#8a8a8a] border-[#7c7c7c]", "bg-[#8a8a8a] border-[#7c7c7c]"]} />
                </div>
                <span className="text-[26.5px] leading-[34px] pt-[2px]">3D View 1</span>
              </div>
              <div className="h-[1578px] bg-black">
                <PointCloud />
              </div>
            </div>
          </div>

          {/* Console */}
          <div className="flex-1 flex flex-col border-t-2 border-[#a8a8a8] min-h-0">
            <DockTitle title="Console" close />
            <div className="pt-[24px] pl-[24px] pr-[26px]">
              <div className="h-[162px] border-2 border-[#a8a8a8] border-t-[#999] bg-white flex flex-col overflow-hidden">
                <div className="h-[130px] flex shrink-0">
                  <div className="flex-1 min-w-0">
                    {LOG.map((t, i) => (
                      <div key={i} className={`${i === 0 ? "h-[28px] pb-[8px] leading-[20px]" : "h-[34px] pb-[3px] leading-[28px]"} flex items-center pl-[12px] text-[25.8px] whitespace-nowrap ${i % 2 ? "bg-[#efefef]" : "bg-white"}`}>
                        {t}
                      </div>
                    ))}
                  </div>
                  <div className="w-[29px] shrink-0 bg-[#f8f8f8] border-l-2 border-[#e6e6e6] flex flex-col justify-end items-center pb-[2px]">
                    <div className="w-[16px] h-[37px] rounded-full bg-[#c0c0c0]" />
                  </div>
                </div>
                <div className="flex-1 flex bg-[#f9f9f9] border-t-2 border-[#e8e8e8]">
                  <div className="flex-1 pl-[3px] pt-[6px]">
                    <div className="w-[2930px] h-[16px] rounded-full bg-[#c0c0c0]" />
                  </div>
                  <div className="w-[29px] bg-white border-l border-[#ddd]" />
                </div>
              </div>
            </div>
          </div>
        </div>
      </div>

      {/* Status bar */}
      <div className="h-[42px] shrink-0 flex items-center pl-[14px] border-t-2 border-[#8a8a8a] bg-gradient-to-b from-[#ececec] to-[#bcbcbc] text-[27.6px] leading-[34px]">
        Aligns two clouds by picking (at least 4) equivalent point pairs
      </div>

      <RenderDialog />

      {/* Red annotation boxes */}
      <Note n="1" className="left-[594px] top-[617px]" />
      <Note n="2" className="left-[594px] top-[713px]" />
      <Note n="3" className="left-[93px] top-[258px]" />
      <Note n="4" className="left-[93px] top-[713px]" />
    </div>
  );
}
